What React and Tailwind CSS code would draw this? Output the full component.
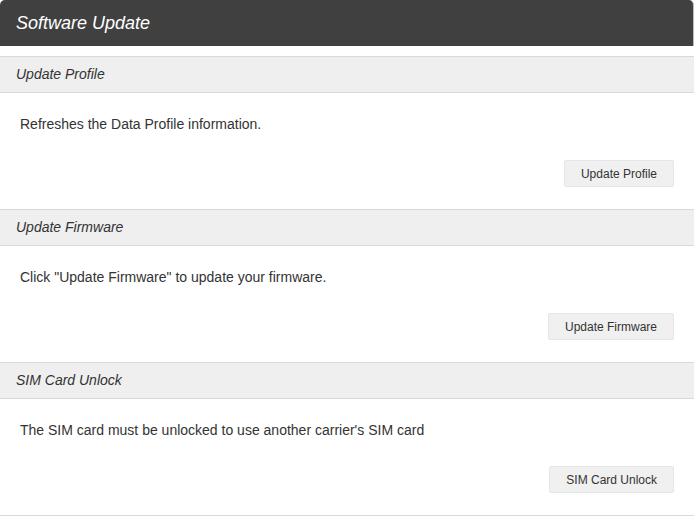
const SECTIONS = [
  {
    title: 'Update Profile',
    text: 'Refreshes the Data Profile information.',
    button: 'Update Profile',
  },
  {
    title: 'Update Firmware',
    text: 'Click "Update Firmware" to update your firmware.',
    button: 'Update Firmware',
  },
  {
    title: 'SIM Card Unlock',
    text: "The SIM card must be unlocked to use another carrier's SIM card",
    button: 'SIM Card Unlock',
  },
]

export default function App() {
  return (
    <div className="w-[694px] bg-white font-['Liberation_Sans',Arial,sans-serif] text-[#333]">
      <div className="flex h-[46px] items-center rounded-t-[5px] border-r border-[#bbb] bg-[#404040] pl-4">
        <h1 className="text-[18px] italic text-white">Software Update</h1>
      </div>
      <div className="mt-[10px]">
        {SECTIONS.map((s, i) => (
          <section key={s.title}>
            <div className="flex h-[37px] items-center border-y border-[#d9d9d9] bg-[#efefef] pl-4">
              <h2 className="text-[14px] italic text-[#333]">{s.title}</h2>
            </div>
            <div
              className={`px-5 pb-[22px] pt-[21px] ${
                i === SECTIONS.length - 1 ? 'border-b border-[#d9d9d9]' : ''
              }`}
            >
              <p className="text-[14px] leading-5">{s.text}</p>
              <div className="mt-[26px] flex justify-end">
                <button className="h-[27px] rounded-[2px] border border-[#e6e6e6] bg-[#f0f0f0] px-4 text-[12px] text-[#333]">
                  {s.button}
                </button>
              </div>
            </div>
          </section>
        ))}
      </div>
    </div>
  )
}
